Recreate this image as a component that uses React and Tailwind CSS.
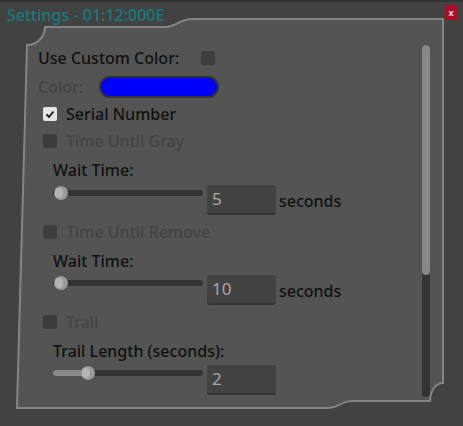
import React from 'react';

const font = { fontFamily: '"Noto Sans", "Open Sans", sans-serif' };

const Box = ({ checked }) =>
  checked ? (
    <span className="flex h-[14px] w-[14px] items-center justify-center rounded-[2px] bg-[#e4e4e4]">
      <svg width="10" height="10" viewBox="0 0 10 10">
        <path d="M1.5 5.5 L4 8 L8.5 2.5" fill="none" stroke="#111" strokeWidth="1.8" />
      </svg>
    </span>
  ) : (
    <span className="block h-[14px] w-[14px] rounded-[2px] bg-[#3d3d3d]" />
  );

const CheckRow = ({ label, checked, h }) => (
  <div className={`flex items-center pl-[5px] ${h}`}>
    <Box checked={checked} />
    <span className={`ml-[9px] text-[16px] font-medium ${checked ? 'text-[#111]' : 'text-[#434343]'}`}>{label}</span>
  </div>
);

const Slider = ({ fill = 0 }) => (
  <div className="relative h-[18px] w-[150px]">
    <div className="absolute left-0 right-0 top-[6px] h-[6px] rounded-full bg-[#333]" />
    {fill > 0 && (
      <div className="absolute left-0 top-[6px] h-[6px] rounded-full bg-[#8a8a8a]" style={{ width: fill }} />
    )}
    <div
      className="absolute top-[2px] h-[14px] w-[14px] rounded-full bg-[#999]"
      style={{ left: Math.max(fill - 7, 1) }}
    >
      <div className="ml-[1px] mt-[2px] h-[10px] w-[8px] rounded-full bg-[#b4b4b4]" />
    </div>
  </div>
);

const SliderRow = ({ value, fill, unit }) => (
  <div className="flex h-[32px] items-start pl-[15px]">
    <Slider fill={fill} />
    <div className="ml-[4px] mt-[1px] flex h-[30px] w-[69px] items-center rounded-[3px] border-b-2 border-[#333] bg-[#424242] pl-[5px] text-[17px] text-[#a8a8a8]">
      {value}
    </div>
    {unit && <span className="ml-[3px] self-center pt-[2px] text-[16px] font-medium text-[#111]">{unit}</span>}
  </div>
);

export default function App() {
  return (
    <div style={font} className="relative flex h-[426px] w-[463px] flex-col overflow-hidden border-t-2 border-[#333] bg-[#424242]">
      <svg className="absolute left-0 top-[-2px]" width="463" height="426" viewBox="0 0 463 426">
        <path
          d="M27,45 A18,18 0 0 0 45,27 L165,27 C178,27 178,19 193,19 L443,19 L443,383 A13,18 0 0 0 430,401 L352,401 C340,401 340,408 328,408 L17,408 Z"
          fill="#545454"
          stroke="#858585"
          strokeWidth="2"
        />
      </svg>

      <div className="relative flex h-[26px] items-start justify-between pl-[7px] pr-[6px]">
        <span className="mt-[3px] text-[16px] font-medium leading-[20px] text-[#137c7c]">Settings - 01:12:000E</span>
        <span className="mt-[3px] flex h-[15px] w-[12px] items-center justify-center bg-[#ad0a2c] text-[9px] font-bold leading-none text-[#f0d8dc]">
          x
        </span>
      </div>

      <div className="relative flex flex-1">
        <div className="flex flex-1 flex-col pl-[38px] pt-[16px]">
          <div className="flex h-[28px] items-center">
            <span className="w-[163px] text-[16px] font-medium text-[#111]">Use Custom Color:</span>
            <Box />
          </div>
          <div className="flex h-[30px] items-center">
            <span className="w-[61px] text-[16px] font-medium text-[#434343]">Color:</span>
            <span className="block h-[22px] w-[120px] rounded-full border-2 border-[#333] bg-[#0000ff]" />
          </div>
          <CheckRow label="Serial Number" checked h="h-[24px]" />
          <CheckRow label="Time Until Gray" h="h-[30px]" />
          <div className="flex h-[28px] items-center pl-[15px] text-[16px] font-medium text-[#111]">Wait Time:</div>
          <SliderRow value="5" unit="seconds" />
          <CheckRow label="Time Until Remove" h="h-[32px]" />
          <div className="flex h-[26px] items-center pl-[15px] text-[16px] font-medium text-[#111]">Wait Time:</div>
          <SliderRow value="10" unit="seconds" />
          <CheckRow label="Trail" h="h-[32px]" />
          <div className="flex h-[26px] items-center pl-[15px] text-[16px] font-medium text-[#111]">Trail Length (seconds):</div>
          <SliderRow value="2" fill={35} />
        </div>

        <div className="mr-[33px] mt-[17px] h-[352px] w-[8px] rounded-full bg-[#333]">
          <div className="h-[230px] w-[8px] rounded-full bg-[#888]" />
        </div>
      </div>
    </div>
  );
}
